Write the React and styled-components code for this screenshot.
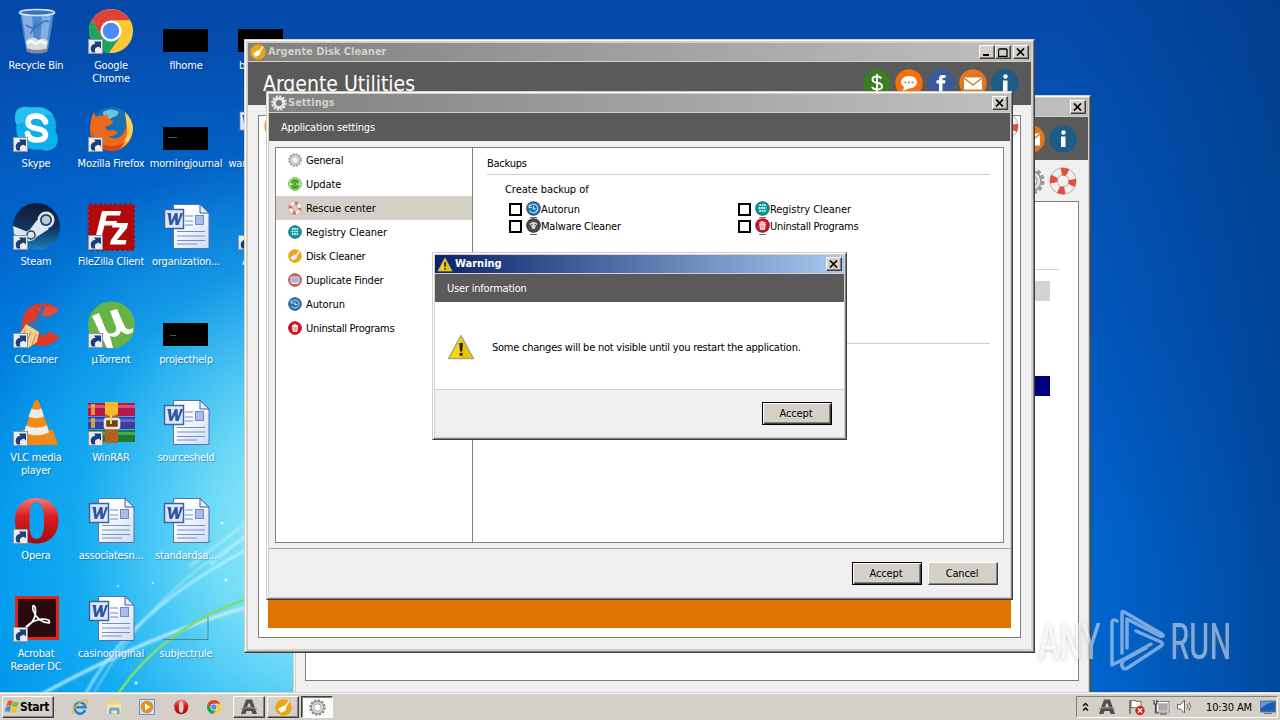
import React from "react";
import styled, { createGlobalStyle } from "styled-components";

const Global = createGlobalStyle`
  * { box-sizing: border-box; }
  html, body { margin: 0; padding: 0; overflow: hidden; }
  body {
    font-family: "DejaVu Sans Condensed", "DejaVu Sans", sans-serif;
    font-stretch: condensed;
    font-size: 11px;
    letter-spacing: -0.27px;
    color: #000;
    cursor: default;
  }
  svg { display: block; flex: none; }
`;

const Screen = styled.div`
  position: relative;
  width: 1280px;
  height: 720px;
  overflow: hidden;
  display: flex;
  flex-direction: column;
  background:
    radial-gradient(ellipse 350px 400px at 320px 535px, rgba(175,242,250,0.98) 0%, rgba(130,228,247,0.85) 32%, rgba(50,190,243,0.38) 70%, rgba(0,150,235,0) 100%),
    radial-gradient(ellipse 520px 560px at 200px 600px, #00a9f6 0%, rgba(0,160,240,0.85) 40%, rgba(0,120,225,0.4) 75%, rgba(0,100,210,0) 100%),
    linear-gradient(90deg, rgba(0,60,140,0) 83%, rgba(0,56,125,0.65) 100%),
    linear-gradient(180deg, #0549aa 0%, #0352b4 18%, #025ac4 45%, #0068d6 75%, #006ad8 100%);
`;

const Wallpaper = styled.svg`
  position: absolute;
  left: 0;
  top: 0;
`;

const Desktop = styled.main`
  position: relative;
  height: 692px;
  overflow: hidden;
`;

const IconGrid = styled.div`
  display: grid;
  grid-auto-flow: column;
  grid-template-rows: repeat(7, 98px);
  grid-auto-columns: 75px;
  margin-left: -1px;
`;

const Shortcut = styled.div`
  display: flex;
  flex-direction: column;
  align-items: center;
  padding-top: 7px;
  color: #fff;
  > svg { margin-right: 2px; }
`;

const ShortcutLabel = styled.span`
  margin-top: 4px;
  line-height: 13px;
  text-align: center;
  white-space: pre;
  letter-spacing: -0.2px;
  margin-right: 1px;
  text-shadow: 1px 1px 1px rgba(0, 40, 100, 0.4);
`;

const Window = styled.section`
  position: absolute;
  left: ${(p) => p.$x}px;
  top: ${(p) => p.$y}px;
  width: ${(p) => p.$w}px;
  height: ${(p) => p.$h}px;
  display: flex;
  flex-direction: column;
  padding: ${(p) => p.$pad ?? 2}px;
  background: #f0f0f0;
  border: 1px solid;
  border-color: #d4d0c8 #404040 #404040 #d4d0c8;
  &::before {
    content: "";
    position: absolute;
    inset: 0;
    border: 1px solid;
    border-color: #fff #808080 #808080 #fff;
    pointer-events: none;
  }
  &::after {
    content: "";
    position: absolute;
    inset: 1px;
    border: ${(p) => (p.$pad === 3 ? 2 : 1)}px solid #d4d0c8;
    pointer-events: none;
  }
`;

const TitleBar = styled.header`
  display: flex;
  align-items: center;
  height: 19px;
  flex: none;
  padding: 0 2px;
  border-bottom: 1px solid #d4d0c8;
  background: ${(p) => (p.$active ? "linear-gradient(90deg, #0a246a, #a6caf0)" : "linear-gradient(90deg, #808080, #c0c0c0)")};
  color: ${(p) => (p.$active ? "#fff" : "#d4d0c8")};
  font-weight: bold;
  letter-spacing: 0;
`;

const TitleText = styled.span`
  flex: 1;
  margin-left: ${(p) => p.$gap ?? 2}px;
  line-height: 16px;
  white-space: nowrap;
`;

const CaptionBtn = styled.button`
  width: 16px;
  height: 14px;
  padding: 0;
  margin-left: ${(p) => p.$ml ?? 0}px;
  display: flex;
  align-items: center;
  justify-content: center;
  background: #d4d0c8;
  border: 1px solid;
  border-color: #fff #404040 #404040 #fff;
  box-shadow: inset -1px -1px 0 #808080;
`;

const Banner = styled.div`
  display: flex;
  align-items: center;
  flex: none;
  height: ${(p) => p.$h}px;
  padding: 0 ${(p) => p.$px ?? 12}px;
  background: #5a5a5a;
  color: #fff;
  letter-spacing: -0.2px;
`;

const AppName = styled.h1`
  margin: 0 auto 0 3px;
  font-size: 21px;
  font-weight: normal;
  letter-spacing: 0;
  line-height: 24px;
  white-space: nowrap;
`;

const RoundLinks = styled.div`
  display: flex;
  gap: 4px;
  margin: 0 0 ${(p) => p.$mb ?? 0}px auto;
`;

const ToolRow = styled.div`
  display: flex;
  align-items: center;
  justify-content: space-between;
  height: ${(p) => p.$h}px;
  padding: 0 ${(p) => p.$px}px;
`;

const Sheet = styled.div`
  flex: 1;
  display: flex;
  flex-direction: column;
  justify-content: ${(p) => p.$justify ?? "flex-start"};
  align-items: ${(p) => p.$align ?? "stretch"};
  margin: ${(p) => p.$m};
  padding: ${(p) => p.$p ?? "0"};
  background: #fff;
  border: 1px solid #808080;
`;

const OrangeBar = styled.div`
  height: 34px;
  background: #e07400;
`;

const Swatch = styled.div`
  width: 60px;
  height: 20px;
  margin: ${(p) => p.$mt}px 9px 0 0;
  background: ${(p) => p.$c};
`;

const Rule = styled.hr`
  width: ${(p) => p.$w ?? "100%"};
  height: 1px;
  margin: 0;
  border: 0;
  flex: none;
  background: #cfcfcf;
`;

const SettingsBody = styled.div`
  display: flex;
  height: 396px;
  margin: 6px 6px 5px;
  background: #fff;
  border: 1px solid #808080;
`;

const Sidebar = styled.nav`
  width: 197px;
  border-right: 1px solid #808080;
`;

const SideItem = styled.div`
  display: flex;
  align-items: center;
  height: 24px;
  padding-left: 12px;
  gap: 4px;
  background: ${(p) => (p.$on ? "#d4d0c8" : "transparent")};
  letter-spacing: ${(p) => p.$ls}px;
  white-space: nowrap;
`;

const Pane = styled.div`
  flex: 1;
  padding: 9px 13px 0 14px;
`;

const PaneTitle = styled.div`
  height: 17px;
  line-height: 14px;
  letter-spacing: -0.25px;
`;

const PaneSub = styled.div`
  margin-top: 8px;
  padding-left: 18px;
  line-height: 14px;
  letter-spacing: -0.05px;
`;

const Checks = styled.div`
  display: grid;
  grid-template-columns: 229px 229px;
  grid-auto-rows: 17px;
  margin: 4px 0 108px 22px;
`;

const Check = styled.label`
  display: flex;
  align-items: center;
  white-space: nowrap;
  letter-spacing: ${(p) => p.$ls}px;
`;

const Box = styled.span`
  width: 13px;
  height: 13px;
  margin-right: 4px;
  border: 2px solid #000;
  background: #fff;
`;

const IconSlot = styled.span`
  height: 17px;
  padding-bottom: 2px;
  background: linear-gradient(${(p) => p.$c}, ${(p) => p.$c}) center bottom / 7px 1px no-repeat;
`;

const Footer = styled.footer`
  flex: 1;
  display: flex;
  justify-content: flex-end;
  align-items: flex-start;
  gap: 6px;
  padding: ${(p) => p.$p};
  border-top: 1px solid ${(p) => p.$line};
  background: #f0f0f0;
`;

const PushBtn = styled.button`
  width: 70px;
  height: 23px;
  padding: 0 2px 0 0;
  font: inherit;
  letter-spacing: -0.15px;
  color: #000;
  background: #d4d0c8;
  border: 1px solid;
  border-color: ${(p) => (p.$def ? "#000" : "#fff #404040 #404040 #fff")};
  box-shadow: ${(p) => (p.$def ? "inset 1px 1px 0 #fff, inset -1px -1px 0 #404040, inset -2px -2px 0 #808080" : "inset -1px -1px 0 #808080")};
`;

const Message = styled.div`
  display: flex;
  align-items: center;
  gap: 17px;
  height: 87px;
  padding: 3px 0 0 12px;
  background: #fff;
  white-space: nowrap;
`;

const MessageText = styled.span`
  letter-spacing: -0.24px;
`;

const Taskbar = styled.footer`
  position: relative;
  display: flex;
  align-items: flex-start;
  height: 28px;
  padding: 3px 2px 0 2px;
  background: #d4d0c8;
  border-top: 1px solid #d4d0c8;
  box-shadow: inset 0 1px 0 #fff;
`;

const StartBtn = styled.button`
  display: flex;
  align-items: center;
  gap: 0;
  width: 52px;
  height: 22px;
  padding: 0 0 0 1px;
  font: bold 12px "DejaVu Sans Condensed", "DejaVu Sans", sans-serif;
  font-stretch: condensed;
  letter-spacing: -0.35px;
  color: #000;
  background: #d4d0c8;
  border: 1px solid;
  border-color: #fff #404040 #404040 #fff;
  box-shadow: inset -1px -1px 0 #808080;
`;

const QuickLaunch = styled.div`
  display: flex;
  gap: 15.5px;
  margin: 2px 0 0 17px;
`;

const Tasks = styled.div`
  display: flex;
  gap: 2px;
  margin-left: 10px;
`;

const TaskBtn = styled.div`
  display: flex;
  align-items: center;
  justify-content: center;
  width: 32px;
  height: 22px;
  background: ${(p) => (p.$on ? "#fafafa" : "#d4d0c8")};
  border: 1px solid;
  border-color: ${(p) => (p.$on ? "#404040 #fff #fff #404040" : "#fff #404040 #404040 #fff")};
  box-shadow: ${(p) => (p.$on ? "inset 1px 1px 0 #808080" : "inset -1px -1px 0 #808080")};
`;

const Tray = styled.div`
  display: flex;
  align-items: center;
  width: 202px;
  height: 22px;
  margin-left: auto;
  padding: 0 0 0 5px;
  border: 1px solid;
  border-color: #808080 #fff #fff #808080;
`;

const TrayGap = styled.span`
  width: ${(p) => p.$w}px;
`;

const Clock = styled.span`
  width: 47px;
  letter-spacing: -0.12px;
  white-space: nowrap;
`;

const Watermark = styled.svg`
  position: absolute;
  left: 1030px;
  top: 600px;
  opacity: 0.55;
`;

/* ---------- desktop icons ---------- */

const Arrow = () => (
  <g transform="translate(1 32)">
    <rect x="0.5" y="0.5" width="14" height="14" fill="#e9edf3" stroke="#8a96a6" />
    <path d="M4 13.500C1 9 3.500 5 7.500 4.700L6 2.500H13V9.500L11 7.800C7 8.500 6.200 10.500 7.500 13.500z" fill="#1c3f7c" />
  </g>
);

const Big = ({ children, arrow }) => (
  <svg width="48" height="48" viewBox="0 0 48 48">
    {children}
    {arrow && <Arrow />}
  </svg>
);

const RecycleBin = () => (
  <Big>
    <path d="M8 5 L42 5 L36 43 Q25 48 14 43z" fill="#7fb0e4" opacity=".6" />
    <path d="M10 7l10 0 2 35-7 0zM30 7h9l-5 34-6 1z" fill="#b9d8f4" opacity=".5" />
    <path d="M14 34q8-6 12-1 6-3 10 1l-1.500 8q-9 4-19 0z" fill="#d8dde0" />
    <path d="M14.500 36l5-2 4 3 5-3 6 3" stroke="#fff" strokeWidth="2" fill="none" />
    <path d="M14 41q11 4 22 0l-1 4q-10 3-20 0z" fill="#7c8b98" />
    <ellipse cx="25" cy="5.500" rx="17.500" ry="3" fill="#3974bb" stroke="#d9e7f3" strokeWidth="1.600" />
    <path d="M14 18q7 6 13 0t10-3M18 27q5-6 7-12" stroke="#2865b4" strokeWidth="2" fill="none" opacity=".65" />
  </Big>
);

const ChromeMark = () => (
  <>
    <circle cx="24" cy="24" r="22" fill="#f9c933" />
    <path d="M5 13A22 22 0 0 1 43 13.500L24 13.500 14.500 29.500z" fill="#db4437" />
    <path d="M5 13A22 22 0 0 0 22 46L33.500 29.500 24 34.500 14.500 29.500z" fill="#1da462" />
    <path d="M43 13.500H24L33.500 29.500 22 46A22 22 0 0 0 43 13.500z" fill="#fbc934" />
    <circle cx="24" cy="24" r="10.500" fill="#fff" />
    <circle cx="24" cy="24" r="8.300" fill="#4c8bf5" />
  </>
);
const Chrome = () => <Big arrow><ChromeMark /></Big>;

const Skype = () => (
  <Big arrow>
    <path d="M5 5Q10 0 19 2.500 34 0 41 10 45 17 43.500 26 48 34 44 41 38 48 28 44.500 15 46 8 36 3 29 4.500 20 1 11 5 5z" fill="#0db1ea" />
    <path d="M5 5Q10 0 19 2.500 34 0 41 10 30 8 4.500 20 1 11 5 5z" fill="#3cc6f4" opacity=".6" />
    <path d="M33.500 17q-2-6-9.500-6-8 0-8 6.500 0 4.500 8.500 6 9 1.500 9 6 0 5.500-8.500 5.500-8 0-9.500-6.500" fill="none" stroke="#fff" strokeWidth="5.600" strokeLinecap="round" />
  </Big>
);

const Firefox = () => (
  <Big arrow>
    <circle cx="25" cy="22" r="20" fill="#1b6fb4" />
    <path d="M16 7q8-5 16 0-2 5-6 5-4 4-9 2z" fill="#69c4e8" />
    <path d="M38 7q8 8 8 17a21.500 21.500 0 0 1-43 1Q3 14 7 7l2 5q4-2 8-1l3-3q0 6 6 8l-1 3-7 3q1 5 8 3l5 2q-4 5-10 4 8 6 15-2 6-8 2-22z" fill="#ee6a1b" />
    <path d="M38 7q8 8 8 17-1 13-14 20 10-11 8-22z" fill="#fcd14f" />
    <path d="M4 23q4 17 20 18 10 0 15-5-5 10-15 10Q6 43 4 23z" fill="#d84612" />
  </Big>
);

const Terminal = ({ mark }) => (
  <Big>
    <rect x="1" y="22" width="45" height="23" fill="#000" />
    {mark && <path d={mark} stroke="#555" strokeWidth="1" />}
  </Big>
);

const Steam = () => (
  <Big arrow>
    <defs>
      <linearGradient id="steam" x1="0" y1="0" x2="0" y2="1">
        <stop offset="0" stopColor="#0f1a35" /><stop offset=".55" stopColor="#12345f" /><stop offset="1" stopColor="#1a82bd" />
      </linearGradient>
    </defs>
    <circle cx="24.500" cy="23.500" r="23.500" fill="url(#steam)" />
    <path d="M1 23l15 6 9-12 12 9-14 9q-4 5-10 2L2 31z" fill="#dfe6ec" />
    <circle cx="34" cy="17" r="8.500" fill="#dfe6ec" /><circle cx="34" cy="17" r="6" fill="#17406f" /><circle cx="34" cy="17" r="4.300" fill="#bccad8" />
    <circle cx="19" cy="32" r="5.500" fill="#dfe6ec" /><circle cx="19" cy="32" r="4" fill="none" stroke="#17406f" strokeWidth="1.500" />
  </Big>
);

const FileZilla = () => (
  <Big arrow>
    <rect x="2" y="2" width="45" height="45" fill="#b10a0a" stroke="#b10a0a" strokeWidth="3" strokeDasharray="3 2" />
    <path d="M9 32L15 8H34L33 12.500H20L18.500 18H30L29 22.500H17.500L15 32z" fill="#fff" />
    <path d="M26 20H41L40 25 30 37H39.500L38.500 41.500H23L24 37 33 24.500H25z" fill="#fff" />
  </Big>
);

const WordDoc = () => (
  <Big>
    <defs>
      <linearGradient id="page" x1="0" y1="0" x2="1" y2="1"><stop offset=".3" stopColor="#fff" /><stop offset="1" stopColor="#cfdcf4" /></linearGradient>
    </defs>
    <path d="M11.500 1.500H38L47 10V45.500H11.500z" fill="url(#page)" stroke="#5570aa" />
    <path d="M38 1.500V10H47z" fill="#e6eefb" stroke="#3f5f9f" />
    <path d="M23 13h8M23 18h8M23 22h8M15 28.500h28M15 33h28M15 37.500h28M15 41h20" stroke="#6f8fd0" strokeWidth="1.200" />
    <rect x="33.500" y="12.500" width="8" height="9" fill="#a9bde6" stroke="#6d8bc8" />
    <rect x="2.500" y="6.500" width="19" height="19" fill="#dce7f8" stroke="#3c62ad" strokeWidth="1.500" />
    <path d="M5 10H9L9.500 18 13 10H15.500L16 18 18.500 10H21L16.500 22H13.500L13 16 10 22H7.500L6 12z" fill="#3155a0" />
  </Big>
);

const CCleaner = () => (
  <Big arrow>
    <path d="M47 9Q40 1 29 2.500 14 4 11 17L9 30Q14 45 29 45 41 45 47.500 36L38 30Q33 36 27 33 22 29 24 21 29 13 38 16z" fill="#dc3b2b" />
    <path d="M47 9L38 16Q33 13 28 16L26 8Q36 2 47 9z" fill="#f0604c" opacity=".5" />
    <path d="M30 4.500l3 1-6 17 1 6-3 5-12-7 4-5 6-1z" fill="#2577b8" />
    <path d="M14 23l13 8-2 10-9 6-9-4-5-7q8-4 12-13z" fill="#f6cf90" />
    <path d="M14 28L8 38M19 31l-5 12M24 33l-4 11" stroke="#c48d48" />
  </Big>
);

const UTorrent = () => (
  <Big arrow>
    <circle cx="24.500" cy="24" r="23.500" fill="#67b346" />
    <path d="M5 15L12 12 19 29Q22 35 28 31 31 28 27 21L23 10 30 8 37 24Q40 31 46 27L46 31Q39 36 34 30 31 38 23 35L26 47H20z" fill="#fff" />
  </Big>
);

const Vlc = () => (
  <Big arrow>
    <path d="M10 31H41L46 46H4z" fill="#f18a14" />
    <path d="M22 3Q24.500-1 27 3L38 34Q25 42 12 34z" fill="#f48a14" />
    <path d="M19.500 9.500Q24.500 12 29.500 9.500L32 17.500Q25 21 16.500 17.500zM14 26.500Q25 31 35 26.500L37 33.500Q25 39 12 33.500z" fill="#ececec" />
  </Big>
);

const WinRar = () => (
  <Big arrow>
    <rect x="1" y="4" width="47" height="13" fill="#b3194a" /><rect x="1" y="6" width="47" height="3" fill="#d94f78" />
    <rect x="1" y="18" width="47" height="12" fill="#3e3c9c" /><rect x="1" y="20" width="47" height="3" fill="#6967c5" />
    <rect x="1" y="31" width="47" height="12" fill="#1f7a32" /><rect x="1" y="33" width="47" height="3" fill="#43a84f" />
    <path d="M5 5v11M7 5v11M5 19v10M7 19v10" stroke="#f2c22c" strokeWidth="1.500" />
    <rect x="18" y="3" width="13" height="41" fill="#b25f1f" /><path d="M18 3h13v12q-7 4-13 0z" fill="#f0bc2c" />
    <rect x="18" y="20" width="14" height="9" rx="1.500" fill="#7a3b10" stroke="#e8e8e8" strokeWidth="2.500" />
    <path d="M24 16v9" stroke="#f3d15b" strokeWidth="2" />
  </Big>
);

const OperaShape = () => (
  <>
    <defs><linearGradient id="opera" x1="0" y1="0" x2="0" y2="1"><stop offset="0" stopColor="#f57a74" /><stop offset=".4" stopColor="#dc1d20" /><stop offset="1" stopColor="#a00c10" /></linearGradient></defs>
    <path fillRule="evenodd" d="M24.500 1C38 1 46.500 10 46.500 23.500S38 46.500 24.500 46.500 3 37 3 23.500 11 1 24.500 1zM24.500 5C18 5 17.500 15 17.500 24S18 42 24.500 42 32 33 32 24 31 5 24.500 5z" fill="url(#opera)" />
  </>
);
const Opera = () => <Big arrow><OperaShape /></Big>;

const Acrobat = () => (
  <Big arrow>
    <rect x="3" y="1" width="44" height="44" fill="#e1251b" />
    <rect x="6" y="4" width="38" height="38" fill="#2a0a0c" />
    <path d="M13 33Q26 25 23 12 20 8 21 15 25 27 37 28 39 24 30 24 20 25 13 33 12 36 15 33" fill="none" stroke="#fff" strokeWidth="1.700" />
  </Big>
);

const Subject = () => (
  <Big>
    <path d="M1 44.500h45V22" fill="none" stroke="#53838f" strokeWidth="1" />
  </Big>
);

const shortcuts = [
  [RecycleBin, "Recycle Bin"], [Skype, "Skype"], [Steam, "Steam"], [CCleaner, "CCleaner"],
  [Vlc, "VLC media\nplayer"], [Opera, "Opera"], [Acrobat, "Acrobat\nReader DC"],
  [Chrome, "Google\nChrome"], [Firefox, "Mozilla Firefox"], [FileZilla, "FileZilla Client"], [UTorrent, "µTorrent"],
  [WinRar, "WinRAR"], [WordDoc, "associatesn..."], [WordDoc, "casinooriginal"],
  [() => <Terminal />, "flhome"], [() => <Terminal mark="M6 32.500h9" />, "morningjournal"], [WordDoc, "organization..."],
  [() => <Terminal mark="M8 34.500h6" />, "projecthelp"], [WordDoc, "sourcesheld"], [WordDoc, "standardsa..."], [Subject, "subjectrule"],
  [() => <Terminal />, "betweenj"], [WordDoc, "warrantylevel"], [() => <Big arrow />, "Argente"],
];

/* ---------- small icons ---------- */

const CloseX = () => (
  <svg width="10" height="8" viewBox="0 0 10 8"><path d="M1 .5l7 7M8 .5l-7 7" stroke="#000" strokeWidth="1.700" /></svg>
);
const Close = (p) => <CaptionBtn {...p} aria-label="close"><CloseX /></CaptionBtn>;

const Gear = ({ s = 14, c = "#9b9b9b", hole = "#fff" }) => (
  <svg width={s} height={s} viewBox="0 0 20 20">
    <circle cx="10" cy="10" r="8.200" fill="none" stroke={c} strokeWidth="3" strokeDasharray="2.600 1.690" />
    <circle cx="10" cy="10" r="5.800" fill={hole} stroke={c} strokeWidth="4" />
    <circle cx="10" cy="10" r="5.600" fill="none" stroke="#e3e3e3" strokeWidth="2" />
  </svg>
);

const Dot = ({ s = 14, c, rim, children }) => (
  <svg width={s} height={s} viewBox="0 0 14 14">
    <circle cx="7" cy="7" r="6.300" fill={c} stroke={rim ?? c} strokeWidth="1" />
    {children}
  </svg>
);

const UpdateIcon = () => (
  <Dot c="#dff2d0" rim="#4faa2a">
    <path d="M2.500 6.500A4.500 4.500 0 0 1 11.500 6.500L9 6.500A2.300 2.300 0 0 0 5 6.500zM11.500 7.700A4.500 4.500 0 0 1 2.500 7.700L5 7.700A2.300 2.300 0 0 0 9 7.700z" fill="#45a31e" />
    <circle cx="7" cy="7" r="1.700" fill="#45a31e" />
  </Dot>
);

const Ring = ({ s = 14, soft }) => (
  <svg width={s} height={s} viewBox="0 0 28 28">
    <circle cx="14" cy="14" r="9.500" fill="none" stroke={soft ? "#d9a9a3" : "#a2a6a6"} strokeWidth="8" />
    <circle cx="14" cy="14" r="9.500" fill="none" stroke="#f2efee" strokeWidth="6.600" />
    <circle cx="14" cy="14" r="9.500" fill="none" stroke={soft ? "#d8736b" : "#e1503f"} strokeWidth="7.400" strokeDasharray="6.500 8.420" strokeDashoffset="2" />
  </svg>
);

const RegistryIcon = ({ s }) => (
  <Dot s={s} c="#14959b" rim="#0d7c83">
    <path d="M4 3.800h6M3.500 6.500h7M4 9.200h6" stroke="#e8fbfb" strokeWidth="1.700" strokeDasharray="1.600 .7" />
  </Dot>
);
const Broom = ({ s, c = "#eda511" }) => (
  <Dot s={s} c={c}>
    <path d="M11.300 2.500L8.500 6.700 7.500 5.300 2.500 8.300 4.800 11.300 8.700 9.500 9 7.400z" fill="#fff" />
    <path d="M11.300 2.300L8 6.500" stroke="#fff" strokeWidth="1.200" />
  </Dot>
);
const DuplicateIcon = () => (
  <Dot c="#c9616c" rim="#b54855">
    <rect x="3" y="4" width="8" height="6" rx="1" fill="#9eb8d4" stroke="#f3dede" /><path d="M4 10.500h6" stroke="#fff" />
  </Dot>
);
const AutorunIcon = ({ s }) => (
  <Dot s={s} c="#2874ae" rim="#215a8a">
    <path d="M3.500 5A4 4 0 1 1 3.500 9M3 3.500V6H5.500" fill="none" stroke="#b6dcf4" strokeWidth="1" />
    <path d="M7 5v2.500H9" fill="none" stroke="#fff" strokeWidth=".9" />
  </Dot>
);
const UninstallIcon = ({ s }) => (
  <Dot s={s} c="#cb1723" rim="#ad0f1a">
    <path d="M4.500 5.500h5l-.6 5H5.100zM4 4.500h6M5.500 3L8 4" stroke="#fff" fill="#f0a6aa" strokeWidth=".9" />
  </Dot>
);
const MalwareIcon = ({ s }) => (
  <Dot s={s} c="#4b4b4e" rim="#333">
    <path d="M3 5.500Q7 2 11 5.500L9 7 8.500 10h-3L5 7z" fill="#d9d9d9" /><path d="M5 6h1M8 6h1" stroke="#333" />
  </Dot>
);

const Circle = ({ c, children }) => (
  <svg width="28" height="28" viewBox="0 0 28 28"><circle cx="14" cy="14" r="13.700" fill={c} />{children}</svg>
);
const Money = () => (
  <Circle c="#3b7d23"><path d="M18.500 9.500Q17 7.500 14 7.500 9.500 7.500 9.500 10.500 9.500 13 14 13.800 19 14.500 19 17.500 19 20.500 14 20.500 10.500 20.500 9 18M14 5V23" fill="none" stroke="#fff" strokeWidth="1.900" /></Circle>
);
const Chat = () => (
  <Circle c="#f5700b"><path d="M14 7C19 7 22 10 22 13.300S19 19.500 14 19.500L8 22 9 18Q6 16 6 13.300C6 10 9 7 14 7z" fill="#fff" /><path d="M9.500 13.300h1.800M13.100 13.300h1.800M16.700 13.300h1.800" stroke="#f5700b" strokeWidth="1.800" /></Circle>
);
const Facebook = () => (
  <Circle c="#3a589b"><path d="M12 23V14.500H9.500V11.300H12V9.500Q12 6 15.500 6H18.500V9H16.500Q15.500 9 15.500 10V11.300H18.500L18 14.500H15.500V23z" fill="#fff" /></Circle>
);
const Mail = () => (
  <Circle c="#e27722"><rect x="5" y="8.500" width="18" height="12" fill="#fff" /><path d="M5 9l9 7 9-7" fill="none" stroke="#e27722" strokeWidth="1.500" /></Circle>
);
const Info = () => (
  <Circle c="#1c5c87"><circle cx="14.500" cy="7.500" r="2.200" fill="#fff" /><path d="M12 11.500H16.500V22H12z" fill="#fff" /></Circle>
);

const WarnIcon = ({ w, h }) => (
  <svg width={w} height={h} viewBox="0 0 28 26">
    <path d="M14 1.500L26.500 24.500H1.500z" fill="#f4d60c" stroke="#a5a18a" strokeWidth="1.400" strokeLinejoin="round" />
    <path d="M14 3L25 24H14z" fill="#d9b400" opacity=".55" />
    <path d="M12.300 9h3.600l-.7 8.500h-2.200zM12.600 19h3v2.800h-3z" fill="#2a2208" />
  </svg>
);

const LogoA = () => (
  <svg width="18" height="18" viewBox="0 0 18 18">
    <path d="M6 1.500h6L17 16h-4.500l-1-3h-5l-1 3H1z" fill="#505050" /><path d="M8.200 5.500h1.600l1.200 4H7z" fill="#d4d0c8" /><path d="M1 11Q9 8 17 11" stroke="#8b8b8b" strokeWidth="1.300" fill="none" />
  </svg>
);

const WinFlag = () => (
  <svg width="16" height="16" viewBox="0 0 16 16">
    <path d="M4 2Q6.500.5 8.500 2L7.300 7Q5 6 2.500 7z" fill="#e8572a" />
    <path d="M9.200 2.500Q12 4 15 2.800L13.500 7.500Q11 8.500 8 7.300z" fill="#7cbb3c" />
    <path d="M2.200 7.800Q5 6.800 7 8L5.700 13Q3.500 11.700.8 12.800z" fill="#3e8fd8" />
    <path d="M7.800 8.200Q10.500 9.500 13.300 8.300L12 13.300Q9 14.500 6.500 13.300z" fill="#f6c126" />
  </svg>
);

const IE = () => (
  <svg width="18" height="18" viewBox="0 0 18 18">
    <path d="M14.200 12A5.500 5.500 0 1 1 14.500 9.300H5" fill="none" stroke="#2384d6" strokeWidth="2.600" />
    <path d="M2 16Q0 13 6 7T16 2Q18 4 15 7" fill="none" stroke="#e8b93a" strokeWidth="1.400" />
  </svg>
);
const Folder = () => (
  <svg width="18" height="18" viewBox="0 0 18 18">
    <path d="M2 3h6l1 1.500h7V15H2z" fill="#f2d676" /><path d="M2 6.500h14V15H2z" fill="#f8e7a3" /><path d="M4 16v-5q0-1.500 2-1.500h6.500q2 0 2 1.500v5h-2.500v-3.500H6.500V16z" fill="#62aee0" />
  </svg>
);
const Player = () => (
  <svg width="18" height="18" viewBox="0 0 18 18">
    <rect x="1.500" y="1.500" width="15" height="15" fill="#cfe3f5" stroke="#5b9bd5" /><circle cx="9" cy="9" r="6.200" fill="#f08a1c" /><path d="M7 5.500l5.500 3.500-5.500 3.500z" fill="#fff" />
  </svg>
);
const OperaSmall = () => <svg width="18" height="18" viewBox="-4 -4 56 56"><OperaShape /></svg>;
const ChromeSmall = () => <svg width="18" height="18" viewBox="-4 -4 56 56"><ChromeMark /></svg>;

const FlagIcon = () => (
  <svg width="18" height="18" viewBox="0 0 18 18">
    <path d="M2 2v14" stroke="#555" strokeWidth="1.400" /><path d="M3 3q3-1.500 5 0t5 0v7q-3 1-5 0t-5 0z" fill="#fff" stroke="#666" />
    <circle cx="12" cy="12.500" r="4.700" fill="#d8241f" /><path d="M10 10.500l4 4M14 10.500l-4 4" stroke="#fff" strokeWidth="1.500" />
  </svg>
);
const NetIcon = () => (
  <svg width="18" height="18" viewBox="0 0 18 18">
    <rect x="5.500" y="4.500" width="11" height="9" fill="#aaa" stroke="#fff" strokeWidth="1.500" /><rect x="4.500" y="3.500" width="12.500" height="10.500" fill="none" stroke="#555" strokeWidth=".7" />
    <path d="M2 2v4h3V2M3.500 6v9H7M8 16h7" fill="none" stroke="#444" strokeWidth="1.200" />
  </svg>
);
const SpeakerIcon = () => (
  <svg width="18" height="18" viewBox="0 0 18 18">
    <path d="M1.500 6.500h3L8.500 2v13L4.500 11h-3z" fill="#fff" stroke="#666" /><path d="M11 6q1.500 2.500 0 5M13 4q3 4.500 0 9" fill="none" stroke="#777" />
  </svg>
);
const MonitorIcon = () => (
  <svg width="16" height="16" viewBox="0 0 16 16"><rect x=".5" y="2" width="15" height="11" fill="#1c5db4" stroke="#6a7889" /><path d="M1 9Q8 3 15 3V2.500H1z" fill="#5b9be3" /><path d="M4 14.500h8" stroke="#777" /></svg>
);
const Chevrons = () => (
  <svg width="7" height="10" viewBox="0 0 7 10"><path d="M1 4l2.500-2.500L6 4M1 8.500L3.500 6 6 8.500" fill="none" stroke="#000" strokeWidth="1.300" /></svg>
);

/* ---------- windows ---------- */

const BackWindow = () => (
  <Window $x={293} $y={95} $w={798} $h={602}>
    <TitleBar><TitleText /><Close /></TitleBar>
    <Banner $h={43} $px={11}><RoundLinks><Mail /><Info /></RoundLinks></Banner>
    <ToolRow $h={41} $px={11}><span /><RoundLinks><Gear s={28} hole="#f0f0f0" /><Ring s={28} /></RoundLinks></ToolRow>
    <Sheet $m="0 9px 13px" $p="67px 19px 0 0" $align="flex-end">
      <Rule $w="200px" />
      <Swatch $c="#d3d3d3" $mt={11} />
      <Swatch $c="#00007f" $mt={75} />
    </Sheet>
  </Window>
);

const MainWindow = () => (
  <Window $x={244} $y={39} $w={791} $h={614} $pad={3}>
    <TitleBar>
      <Broom s={16} />
      <TitleText>Argente Disk Cleaner</TitleText>
      <CaptionBtn aria-label="minimize"><svg width="8" height="8"><path d="M0 7h6" stroke="#000" strokeWidth="2" /></svg></CaptionBtn>
      <CaptionBtn aria-label="maximize"><svg width="10" height="9"><path d="M1 1h8M.5 1v7.500h8.500V1" fill="none" stroke="#000" strokeWidth="1.300" /></svg></CaptionBtn>
      <Close $ml={2} />
    </TitleBar>
    <Banner $h={43}>
      <AppName>Argente Utilities</AppName>
      <RoundLinks $mb={2}><Money /><Chat /><Facebook /><Mail /><Info /></RoundLinks>
    </Banner>
    <Sheet $m="10px 10px 11px" $p="0 9px 9px" $justify="flex-end"><OrangeBar /></Sheet>
  </Window>
);

const CornerIcons = styled.div`
  position: absolute;
  left: 264px;
  top: 112px;
  width: 755px;
  display: flex;
  justify-content: space-between;
  align-items: center;
`;

const sections = [
  ["General", () => <Gear />, -0.27], ["Update", UpdateIcon, -0.1], ["Rescue center", () => <Ring soft />, -0.05],
  ["Registry Cleaner", RegistryIcon, -0.05], ["Disk Cleaner", Broom, -0.27], ["Duplicate Finder", DuplicateIcon, -0.2],
  ["Autorun", AutorunIcon, -0.1], ["Uninstall Programs", UninstallIcon, -0.27],
];
const backups = [
  ["Autorun", AutorunIcon, -0.1, "#a8434b"], ["Registry Cleaner", RegistryIcon, -0.05, "#c0565c"],
  ["Malware Cleaner", MalwareIcon, -0.2, "#3c6f85"], ["Uninstall Programs", UninstallIcon, -0.27, "#4a78a8"],
];

const SettingsWindow = () => (
  <Window $x={266} $y={91} $w={747} $h={509}>
    <TitleBar>
      <Gear s={16} c="#e0e0e0" hole="#777" />
      <TitleText $gap={1}>Settings</TitleText>
      <Close />
    </TitleBar>
    <Banner $h={28}>Application settings</Banner>
    <SettingsBody>
      <Sidebar>
        {sections.map(([name, Icon, ls]) => (
          <SideItem key={name} $on={name === "Rescue center"} $ls={ls}><Icon s={14} />{name}</SideItem>
        ))}
      </Sidebar>
      <Pane>
        <PaneTitle>Backups</PaneTitle>
        <Rule />
        <PaneSub>Create backup of</PaneSub>
        <Checks>
          {backups.map(([name, Icon, ls, tint]) => (
            <Check key={name} $ls={ls}><Box /><IconSlot $c={tint}><Icon s={15} /></IconSlot>{name}</Check>
          ))}
        </Checks>
        <Rule />
      </Pane>
    </SettingsBody>
    <Footer $p="13px 12px 0 0" $line="#a0a0a0"><PushBtn $def>Accept</PushBtn><PushBtn>Cancel</PushBtn></Footer>
  </Window>
);

const WarningWindow = () => (
  <Window $x={432} $y={252} $w={415} $h={188}>
    <TitleBar $active><WarnIcon w={16} h={15} /><TitleText>Warning</TitleText><Close /></TitleBar>
    <Banner $h={28}>User information</Banner>
    <Message><WarnIcon w={28} h={26} /><MessageText>Some changes will be not visible until you restart the application.</MessageText></Message>
    <Footer $p="12px 12px 0 0" $line="#d4d0c8"><PushBtn $def>Accept</PushBtn></Footer>
  </Window>
);

export default function App() {
  return (
    <>
      <Global />
      <Screen>
        <Wallpaper width="1280" height="720" viewBox="0 0 1280 720" fill="none">
          <defs><filter id="soft"><feGaussianBlur stdDeviation="1.300" /></filter></defs>
          <g filter="url(#soft)">
            <path d="M40 695Q150 635 250 606" stroke="#d6f6fc" strokeWidth="3" opacity=".8" />
            <path d="M85 695Q130 610 250 548" stroke="#e0fbff" strokeWidth="2.500" opacity=".7" />
            <path d="M93 695Q150 590 250 535" stroke="#c8f4fc" strokeWidth="1.500" opacity=".6" />
            <path d="M190 566L250 520M210 565L250 532" stroke="#dcfaff" strokeWidth="2.500" opacity=".5" />
          </g>
          <path d="M117 695Q165 625 250 598" stroke="#7fdc6a" strokeWidth="2.500" />
          <g fill="#fff" opacity=".8"><circle cx="222" cy="523" r="1.500" /><circle cx="226" cy="580" r="1.500" /><circle cx="136" cy="683" r="1.500" /><circle cx="118" cy="586" r="1" /><circle cx="153" cy="583" r="1" /></g>
        </Wallpaper>
        <Desktop>
          <IconGrid>
            {shortcuts.map(([Icon, label]) => (
              <Shortcut key={label}><Icon /><ShortcutLabel>{label}</ShortcutLabel></Shortcut>
            ))}
          </IconGrid>
          <BackWindow />
          <MainWindow />
          <CornerIcons><Broom s={28} /><Ring s={28} /></CornerIcons>
          <SettingsWindow />
          <WarningWindow />
        </Desktop>
        <Watermark width="210" height="80" viewBox="0 0 210 80">
          <defs><filter id="glow" x="-20%" y="-20%" width="140%" height="140%"><feDropShadow dx="0" dy="1" stdDeviation="2" floodColor="#666" floodOpacity=".6" /></filter></defs>
          <g filter="url(#glow)" fill="#edf2f9" fontFamily="Roboto, sans-serif" fontSize="50">
            <text transform="translate(8 59) scale(.64 1)" textLength="98" lengthAdjust="spacingAndGlyphs">ANY</text>
            <text transform="translate(140 59) scale(.64 1)" textLength="96" lengthAdjust="spacingAndGlyphs">RUN</text>
          </g>
          <g fill="none" stroke="#dbe7f7" strokeWidth="3.500" strokeLinejoin="round" strokeLinecap="round">
            <path d="M87 21Q82 18 82 23V65L96 58 121 44" />
            <path d="M92 53V13Q92 10 96 13L132 34Q135 37 130 36L97 19V48" />
            <path d="M106 31L131 42Q134 44 131 46L99 67Q95 70 93 68 90 64 94 60L116 48" />
          </g>
        </Watermark>
        <Taskbar>
          <StartBtn><WinFlag />Start</StartBtn>
          <QuickLaunch><IE /><Folder /><Player /><OperaSmall /><ChromeSmall /></QuickLaunch>
          <Tasks>
            <TaskBtn><LogoA /></TaskBtn>
            <TaskBtn><Broom s={17} /></TaskBtn>
            <TaskBtn $on><Gear s={17} c="#8d8d8d" /></TaskBtn>
          </Tasks>
          <Tray>
            <Chevrons /><TrayGap $w={9} /><LogoA /><TrayGap $w={12} /><FlagIcon /><TrayGap $w={6} /><NetIcon /><TrayGap $w={6} /><SpeakerIcon />
            <TrayGap $w={12} /><Clock>10:30 AM</Clock><TrayGap $w={7} /><MonitorIcon />
          </Tray>
        </Taskbar>
      </Screen>
    </>
  );
}
